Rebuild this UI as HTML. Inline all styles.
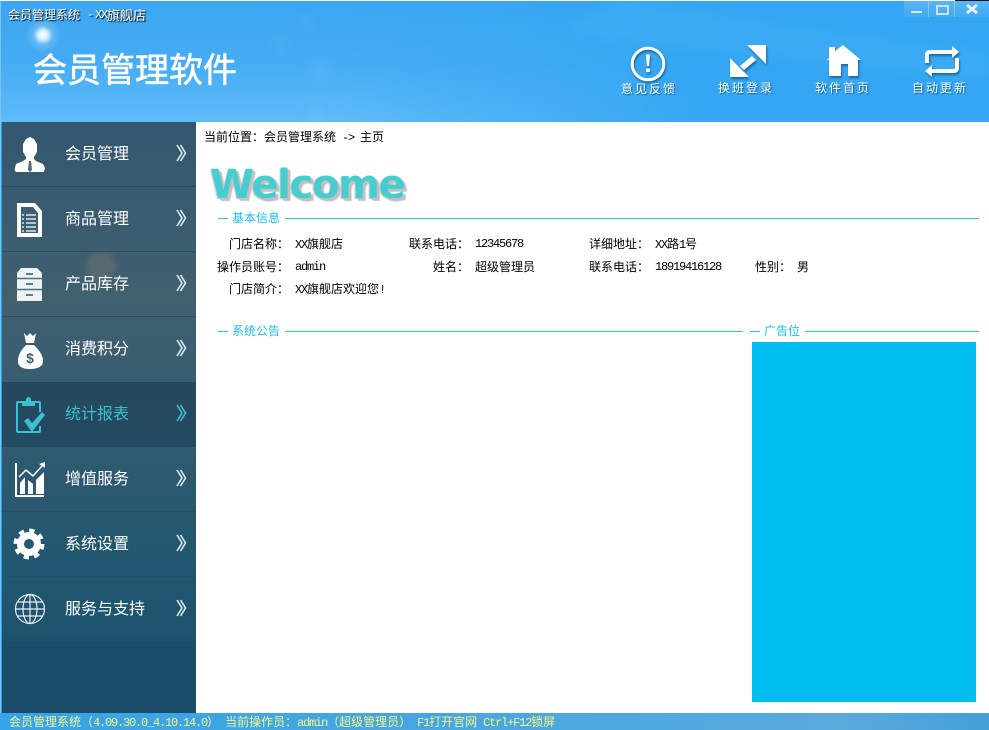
<!DOCTYPE html>
<html lang="zh"><head><meta charset="utf-8"><title>会员管理系统</title>
<style>
html,body{margin:0;padding:0}
body{width:989px;height:730px;overflow:hidden;background:#fff;position:relative;font-family:"WenQuanYi Zen Hei","Noto Sans CJK SC",sans-serif;font-size:12px;color:#000}
.a{position:absolute;white-space:pre;line-height:14px}
.n{font:12px/14px "Liberation Mono",monospace;letter-spacing:-1.200px;white-space:pre}
.m{font:12px/14px "Liberation Mono",monospace;letter-spacing:-1.200px}
#hd{position:absolute;left:0;top:1px;width:989px;height:121px;overflow:hidden;background:linear-gradient(90deg,rgba(52,166,243,0) 35%,#34a6f3 72%),linear-gradient(180deg,#3aa6f1 0%,#45acf4 50%,#5fbbf9 100%)}
.tb{position:absolute;color:#fff;font-size:12px;letter-spacing:2px;text-shadow:1px 1px 1px #0c5c94;line-height:14px;white-space:nowrap}
.ic{filter:drop-shadow(1px 2px 1px rgba(10,70,120,.65))}
#sb{position:absolute;left:2px;top:122px;width:194px;height:591px;overflow:hidden;background:linear-gradient(180deg,#33576f 0%,#416070 30%,#305a70 55%,#1f5670 78%,#1b4e68 100%)}
.r{position:absolute;left:0;width:194px;height:65px;border-bottom:1px solid #2a4d63;box-sizing:border-box}
.t{position:absolute;left:63px;top:21px;font-size:16px;line-height:18px;color:#fff;white-space:nowrap}
.c{position:absolute;left:173px;top:21px;width:12px;height:20px}
.i{position:absolute;left:0;top:0}
.lg{position:absolute;height:1px;background:#1fc8f0}
.lt{position:absolute;color:#14c3f3;font-size:12px;line-height:14px;white-space:nowrap}
</style></head><body>
<div id="hd">
 <svg style="position:absolute;left:0;top:0" width="989" height="121"><g style="filter:blur(5px)"><polygon points="620,0 989,52 989,78 600,38 560,28" fill="#6cd0ff" opacity=".12"/><circle cx="320" cy="68" r="10" fill="#8fd4ff" opacity=".14"/><circle cx="280" cy="45" r="8" fill="#8fd4ff" opacity=".1"/><circle cx="315" cy="116" r="8" fill="#a6e0ff" opacity=".16"/><circle cx="305" cy="20" r="7" fill="#8fd4ff" opacity=".12"/></g></svg>
 <div style="position:absolute;left:25px;top:16px;width:36px;height:36px;border-radius:50%;background:radial-gradient(circle,#fff 0,#d6f0ff 18%,rgba(255,255,255,.18) 38%,rgba(255,255,255,0) 70%)"></div>
</div>
<div class="a" style="left:8px;top:8px;color:#fff;text-shadow:1px 1px 1px #000">会员管理系统</div>
<div class="a n" style="left:87px;top:8px;color:#fff;text-shadow:1px 1px 1px #000">-</div>
<div class="a n" style="left:95px;top:8px;color:#fff;text-shadow:1px 1px 1px #000">XX</div>
<div class="a" style="left:107px;top:8px;color:#fff;text-shadow:1px 1px 1px #000;font-size:13px">旗舰店</div>
<div class="a" style="left:33px;top:48px;color:#fff;font-size:34px;line-height:40px;font-family:'Noto Sans CJK SC',sans-serif;-webkit-text-stroke:.6px #fff">会员管理软件</div>

<!-- window buttons -->
<div style="position:absolute;left:904px;top:1px;width:85px;height:16px;background:linear-gradient(180deg,rgba(255,255,255,.18),rgba(255,255,255,.05))"></div>
<div style="position:absolute;left:928px;top:1px;width:1px;height:16px;background:rgba(255,255,255,.3)"></div>
<div style="position:absolute;left:954px;top:1px;width:1px;height:16px;background:rgba(255,255,255,.3)"></div>
<div style="position:absolute;left:911px;top:11px;width:11px;height:2px;background:#dfe9ef"></div>
<div style="position:absolute;left:936px;top:5px;width:9px;height:6px;border:2px solid #cfe2ee"></div>
<svg class="a" style="left:966px;top:4px" width="12" height="10"><path d="M1 1L11 9M11 1L1 9" stroke="#e6eef3" stroke-width="3"/></svg>
<div style="position:absolute;left:955px;top:0;width:34px;height:1px;background:#111"></div>

<!-- toolbar icons -->
<svg class="a ic" style="left:630px;top:45px" width="38" height="38"><circle cx="18" cy="19" r="15.800" fill="none" stroke="#fff" stroke-width="3"/><path d="M16 9.500h4L19.200 21h-2.400zM16.200 23.500h3.600v3.600h-3.600z" fill="#fff"/></svg>
<svg class="a ic" style="left:728px;top:43px" width="42" height="38"><path d="M19 2H38V21zM2 34V15L21 34zM24 13L28 17 16 27 12 23z" fill="#fff"/></svg>
<svg class="a ic" style="left:825px;top:44px" width="38" height="34"><path d="M4 3H10V7L18 1 36 16H33V32H23V20H16V32H4V16H2L4 14z" fill="#fff"/></svg>
<svg class="a ic" style="left:923px;top:45px" width="38" height="34"><path d="M4 18V10Q4 7 7 7H29" fill="none" stroke="#fff" stroke-width="4"/><path d="M29 1L36 7 29 13z" fill="#fff"/><path d="M34 13V22Q34 26 31 26H9" fill="none" stroke="#fff" stroke-width="4"/><path d="M9 20L2 26 9 32z" fill="#fff"/></svg>
<div class="tb" style="left:621px;top:82px">意见反馈</div>
<div class="tb" style="left:718px;top:81px">换班登录</div>
<div class="tb" style="left:815px;top:81px">软件首页</div>
<div class="tb" style="left:912px;top:81px">自动更新</div>

<!-- sidebar -->
<div id="sb">
 <div style="position:absolute;left:84px;top:129px;width:30px;height:30px;border-radius:50%;background:rgba(150,135,115,.28);filter:blur(3px)"></div>
 <div class="r" style="top:0"><svg class="i" width="50" height="65"><path d="M28 15L24 17 21 22V30L24 35V37L21 39 14 42 12.500 48 14 50H42L43 46 41 42 34 39 32 37V35L35 30V22L32 17z" fill="#fff"/><path d="M27 39H29L30 48 28 50 26 48z" fill="#4b6a7c"/></svg><div class="t">会员管理</div><svg class="c"><path d="M2 2L7 10 2 18M5.500 2L10.500 10 5.500 18" fill="none" stroke="#dcecf5" stroke-width="1.600"/></svg></div>
 <div class="r" style="top:65px"><svg class="i" width="50" height="65"><path d="M15 16H33L40 24V50H15z" fill="#fff"/><path d="M19 20H31L36 26V46H19z" fill="#3d5f73"/><path d="M20 28H22M24 28H34M20 32H22M24 32H34M20 36H22M24 36H34M20 40H22M24 40H34M20 44H22M24 44H34" stroke="#fff" stroke-width="1.200"/></svg><div class="t">商品管理</div><svg class="c"><path d="M2 2L7 10 2 18M5.500 2L10.500 10 5.500 18" fill="none" stroke="#dcecf5" stroke-width="1.600"/></svg></div>
 <div class="r" style="top:130px"><svg class="i" width="50" height="65"><path d="M19 16H35L40 21V49H15V21z" fill="#eef3f5"/><path d="M15 26.500H40M15 37.500H40" stroke="#4f6c7e" stroke-width="1.500"/><path d="M24 21H31V23H24zM24 31H31V33H24zM24 42H31V44H24z" fill="#5f7c8c"/></svg><div class="t">产品库存</div><svg class="c"><path d="M2 2L7 10 2 18M5.500 2L10.500 10 5.500 18" fill="none" stroke="#dcecf5" stroke-width="1.600"/></svg></div>
 <div class="r" style="top:195px;border:0"><svg class="i" width="50" height="65"><path d="M22 16L25 19 28 16 31 19 34 16 32 26H24zM24 28H32C38 34 41 39 41 44 41 50 35 52 28 52 21 52 16 50 16 44 16 39 18 34 24 28z" fill="#fff"/><text x="28" y="46" font-size="14" font-weight="700" fill="#3d5f73" text-anchor="middle" font-family="Liberation Sans">$</text></svg><div class="t">消费积分</div><svg class="c"><path d="M2 2L7 10 2 18M5.500 2L10.500 10 5.500 18" fill="none" stroke="#dcecf5" stroke-width="1.600"/></svg></div>
 <div class="r" style="top:260px;background:linear-gradient(180deg,#27485c,#234a60);border:0"><svg class="i" width="50" height="65"><path d="M21 20H16Q15 20 15 21V49Q15 50 16 50H37Q38 50 38 49V44M32 20H37Q38 20 38 21V30" fill="none" stroke="#3bbfd3" stroke-width="2"/><path d="M20 24V19H24Q24 15 26.500 15 29 15 29 19H33V24z" fill="#3bbfd3"/><path d="M22 39L26 36 30 41 40 30 43 33 30 50z" fill="#3bbfd3"/></svg><div class="t" style="color:#3bbfd3">统计报表</div><svg class="c"><path d="M2 2L7 10 2 18M5.500 2L10.500 10 5.500 18" fill="none" stroke="#3bbfd3" stroke-width="1.600"/></svg></div>
 <div class="r" style="top:325px"><svg class="i" width="50" height="65"><path d="M14 16V49H42" fill="none" stroke="#fff" stroke-width="2"/><path d="M18 47V36L23 30V47zM26 47V33L31 37V47zM34 47V33L42 25V47z" fill="#fff"/><path d="M17 30L24 23 31 29 40 19" fill="none" stroke="#fff" stroke-width="1.500"/><path d="M37 17L43 15 43 21z" fill="#fff"/></svg><div class="t">增值服务</div><svg class="c"><path d="M2 2L7 10 2 18M5.500 2L10.500 10 5.500 18" fill="none" stroke="#dcecf5" stroke-width="1.600"/></svg></div>
 <div class="r" style="top:390px"><svg class="i" width="50" height="65"><circle cx="27" cy="32" r="8.500" fill="none" stroke="#fff" stroke-width="7"/><circle cx="27" cy="32" r="13.500" fill="none" stroke="#fff" stroke-width="4" stroke-dasharray="5.300 5.300"/></svg><div class="t">系统设置</div><svg class="c"><path d="M2 2L7 10 2 18M5.500 2L10.500 10 5.500 18" fill="none" stroke="#dcecf5" stroke-width="1.600"/></svg></div>
 <div class="r" style="top:455px;height:64px;border:0"><svg class="i" width="50" height="65"><g fill="none" stroke="#e8eef2" stroke-width="1.200"><circle cx="28" cy="32" r="14.500"/><ellipse cx="28" cy="32" rx="7" ry="14.500"/><path d="M28 17V47M14 32H43M16 25H41M16 39H41"/></g></svg><div class="t">服务与支持</div><svg class="c"><path d="M2 2L7 10 2 18M5.500 2L10.500 10 5.500 18" fill="none" stroke="#dcecf5" stroke-width="1.600"/></svg></div>
 <div style="position:absolute;left:0;top:519px;width:194px;height:72px;background:#1b4d68"></div>
</div>
<div style="position:absolute;left:0;top:1px;width:1px;height:712px;background:#7cc4ee"></div>
<div style="position:absolute;left:1px;top:122px;width:1px;height:591px;background:#2b9de0"></div>

<!-- content -->
<div class="a" style="left:204px;top:130px">当前位置：会员管理系统<span class="n"> -&gt; </span>主页</div>
<div class="a" style="left:210px;top:161px;font:700 40px/48px 'DejaVu Sans',sans-serif;letter-spacing:-1.300px;color:#47cdd0;text-shadow:-1px 1px 1px #c6c6c6,2px 2px 1px #c0c0c0,3px 3px 1px #c6c6c6">Welcome</div>

<div class="lg" style="left:218px;top:218px;width:10px"></div><div class="lt" style="left:232px;top:211px">基本信息</div><div class="lg" style="left:285px;top:218px;width:694px"></div>

<div class="a" style="left:229px;top:237px">门店名称：</div><div class="a" style="left:295px;top:237px"><span class="n">XX</span>旗舰店</div>
<div class="a" style="left:409px;top:237px">联系电话：</div><div class="a m" style="left:475px;top:237px">12345678</div>
<div class="a" style="left:589px;top:237px">详细地址：</div><div class="a" style="left:655px;top:237px"><span class="n">XX</span>路<span class="n">1</span>号</div>

<div class="a" style="left:217px;top:260px">操作员账号：</div><div class="a m" style="left:295px;top:260px">admin</div>
<div class="a" style="left:433px;top:260px">姓名：</div><div class="a" style="left:475px;top:260px">超级管理员</div>
<div class="a" style="left:589px;top:260px">联系电话：</div><div class="a m" style="left:655px;top:260px">18919416128</div>
<div class="a" style="left:755px;top:260px">性别：</div><div class="a" style="left:797px;top:260px">男</div>

<div class="a" style="left:229px;top:282px">门店简介：</div><div class="a" style="left:295px;top:282px"><span class="n">XX</span>旗舰店欢迎您<b class="n">!</b></div>

<div class="lg" style="left:218px;top:331px;width:10px"></div><div class="lt" style="left:232px;top:324px">系统公告</div><div class="lg" style="left:285px;top:331px;width:458px"></div>
<div class="lg" style="left:750px;top:331px;width:10px"></div><div class="lt" style="left:764px;top:324px">广告位</div><div class="lg" style="left:805px;top:331px;width:174px"></div>
<div style="position:absolute;left:752px;top:342px;width:224px;height:360px;background:#00bdf0"></div>

<!-- status bar -->
<div style="position:absolute;left:0;top:713px;width:989px;height:17px;background:linear-gradient(90deg,#36a4e8 0%,#45a6e2 40%,#5aaade 85%,#459fd8 100%)"></div>
<div class="a" style="left:9px;top:715px;color:#f5f58a">会员管理系统（<span class="n">4.09.30.0_4.10.14.0</span>）<span class="n"> </span>当前操作员：<span class="n">admin</span>（超级管理员）<span class="n"> F1</span>打开官网<span class="n"> Ctrl+F12</span>锁屏</div>
</body></html>
